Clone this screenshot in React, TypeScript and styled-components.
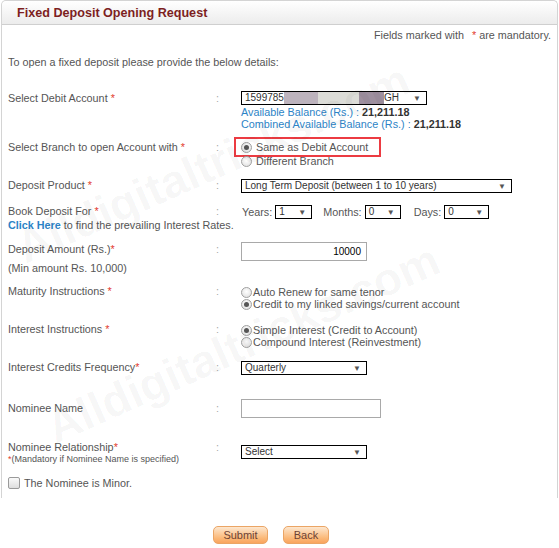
import React, { FC } from "react";
import styled, { createGlobalStyle, css } from "styled-components";

const GlobalStyle = createGlobalStyle`
  html, body {
    margin: 0;
    padding: 0;
    background: #fff;
  }
  body {
    font-family: "Liberation Sans", Arial, sans-serif;
    font-size: 10.8px;
    color: #555;
  }
`;

const Page = styled.div`
  position: relative;
  width: 559px;
  height: 548px;
  overflow: hidden;
`;

const Panel = styled.div`
  margin-left: 1px;
  width: 555px;
  height: 497px;
  border: 1px solid #d4d4d4;
  border-bottom: none;
  border-radius: 5px 5px 0 0;
`;

const Header = styled.div`
  height: 23px;
  display: flex;
  align-items: center;
  padding-left: 15px;
  border-bottom: 1px solid #cfcfcf;
  border-radius: 5px 5px 0 0;
  background: linear-gradient(#ffffff, #ececec);

  h1 {
    margin: 0;
    font-size: 12.6px;
    font-weight: bold;
    color: #7d1f1f;
  }
`;

const Note = styled.div`
  margin-top: 3px;
  height: 14px;
  line-height: 14px;
  text-align: right;
  padding-right: 6px;
`;

const Star = styled.span<{ $pad?: boolean }>`
  color: #e23a2e;
  ${({ $pad }) => $pad && css`margin: 0 3px 0 5px;`}
`;

const Row = styled.div<{ $h: number }>`
  display: flex;
  align-items: flex-start;
  height: ${({ $h }) => $h}px;
  padding-left: 6px;
  line-height: 14px;
`;

const Intro = styled(Row)`
  margin-top: 13px;
`;

const Label = styled.div<{ $pt?: number }>`
  width: 208px;
  flex-shrink: 0;
  padding-top: ${({ $pt }) => $pt ?? 0}px;
`;

const SubNote = styled.div<{ $mt?: number; $small?: boolean }>`
  margin-top: ${({ $mt }) => $mt ?? 0}px;
  ${({ $small }) =>
    $small &&
    css`
      font-size: 9px;
      line-height: 11px;
    `}
`;

const Colon = styled.div<{ $pt?: number }>`
  width: 25px;
  flex-shrink: 0;
  color: #a8a8a8;
  padding-top: ${({ $pt }) => $pt ?? 0}px;
`;

const Value = styled.div`
  display: flex;
  flex-direction: column;
`;

const BalanceLine = styled.div`
  line-height: 12px;
  white-space: nowrap;
`;

const LinkText = styled.span<{ $bold?: boolean }>`
  color: #2c83c6;
  ${({ $bold }) => $bold && css`font-weight: bold;`}
`;

const Amount = styled.b`
  color: #333;
`;

const SelectBox = styled.div<{ $w: number }>`
  position: relative;
  box-sizing: border-box;
  width: ${({ $w }) => $w}px;
  height: 14px;
  border: 1px solid #000;
  display: flex;
  align-items: center;
  padding-left: 3px;
  font-size: 10px;
  color: #333;
  line-height: 12px;
  white-space: nowrap;
  overflow: hidden;

  &::after {
    content: "▼";
    position: absolute;
    right: 5px;
    top: 1px;
    font-size: 8px;
    color: #555;
  }
`;

const Blur = styled.span<{ $w: number; $c: string }>`
  display: inline-block;
  flex-shrink: 0;
  width: ${({ $w }) => $w}px;
  height: 12px;
  background: ${({ $c }) => $c};
`;

const TextBox = styled.div<{ $w: number }>`
  box-sizing: border-box;
  width: ${({ $w }) => $w}px;
  height: 19px;
  border: 1px solid #a9a9a9;
  display: flex;
  align-items: center;
  justify-content: flex-end;
  padding-right: 5px;
  font-size: 10px;
  color: #000;
`;

const Options = styled.div<{ $lh: number; $pt?: number }>`
  display: flex;
  flex-direction: column;
  line-height: ${({ $lh }) => $lh}px;
  padding-top: ${({ $pt }) => $pt ?? 0}px;
`;

const Option = styled.label<{ $gap: number; $highlight?: boolean }>`
  position: relative;
  display: flex;
  align-items: center;
  gap: ${({ $gap }) => $gap}px;
  white-space: nowrap;

  ${({ $highlight }) =>
    $highlight &&
    css`
      &::after {
        content: "";
        position: absolute;
        left: -7px;
        top: -3px;
        width: 143px;
        height: 16px;
        border: 2px solid #ec3b42;
      }
    `}
`;

const RadioDot = styled.span<{ $on?: boolean }>`
  box-sizing: border-box;
  width: 11px;
  height: 11px;
  border-radius: 50%;
  border: 1px solid #a0a0a0;
  background: radial-gradient(circle at 50% 40%, #ffffff, #dcdcdc);
  display: inline-flex;
  align-items: center;
  justify-content: center;
  flex-shrink: 0;

  &::before {
    content: "";
    width: 5px;
    height: 5px;
    border-radius: 50%;
    background: ${({ $on }) => ($on ? "#555" : "transparent")};
  }
`;

const Tenure = styled.div`
  display: flex;
  align-items: center;
  padding-top: 1px;
`;

const TenureLabel = styled.span<{ $ml: number }>`
  margin-left: ${({ $ml }) => $ml}px;
  margin-right: 3px;
`;

const CheckRow = styled(Row)`
  padding-left: 6px;
`;

const CheckBox = styled.span`
  box-sizing: border-box;
  width: 12px;
  height: 12px;
  margin-top: 1px;
  margin-right: 4px;
  border: 1px solid #9a9a9a;
  border-radius: 2px;
  background: linear-gradient(#fafafa, #dedede);
`;

const Buttons = styled.div`
  display: flex;
  gap: 15px;
  padding-left: 213px;
  margin-top: 28px;
`;

const Button = styled.button<{ $w: number }>`
  box-sizing: border-box;
  width: ${({ $w }) => $w}px;
  height: 18px;
  padding: 0;
  border: 1px solid #eba565;
  border-radius: 5px;
  background: linear-gradient(#fde7cf, #fbb877 70%, #f9a45e);
  font-family: "Liberation Sans", Arial, sans-serif;
  font-size: 11px;
  color: #6e4234;
  line-height: 16px;
`;

const Watermark = styled.div<{ $x: number; $y: number }>`
  position: absolute;
  left: ${({ $x }) => $x}px;
  top: ${({ $y }) => $y}px;
  transform: rotate(-24deg);
  transform-origin: left bottom;
  font-size: 46px;
  font-weight: bold;
  color: rgba(0, 0, 0, 0.04);
  white-space: nowrap;
  pointer-events: none;
`;

const Radio: FC<{ on?: boolean; gap: number; highlight?: boolean; text: string }> = ({
  on,
  gap,
  highlight,
  text,
}) => (
  <Option $gap={gap} $highlight={highlight}>
    <RadioDot $on={on} />
    {text}
  </Option>
);

const App: FC = () => {
  return (
    <Page>
      <GlobalStyle />
      <Panel>
        <Header>
          <h1>Fixed Deposit Opening Request</h1>
        </Header>
        <Note>
          Fields marked with <Star $pad>*</Star>are mandatory.
        </Note>

        <Intro $h={36}>To open a fixed deposit please provide the below details:</Intro>

        <Row $h={49}>
          <Label>
            Select Debit Account <Star>*</Star>
          </Label>
          <Colon>:</Colon>
          <Value>
            <SelectBox $w={186}>
              1599785
              <Blur $w={34} $c="#bdb3bd" />
              <Blur $w={41} $c="#dcdcd7" />
              <Blur $w={25} $c="#9e909f" />
              GH
            </SelectBox>
            <BalanceLine style={{ marginTop: 1 }}>
              <LinkText>Available Balance (Rs.) : </LinkText>
              <Amount>21,211.18</Amount>
            </BalanceLine>
            <BalanceLine>
              <LinkText>Combined Available Balance (Rs.) : </LinkText>
              <Amount>21,211.18</Amount>
            </BalanceLine>
          </Value>
        </Row>

        <Row $h={38}>
          <Label>
            Select Branch to open Account with <Star>*</Star>
          </Label>
          <Colon>:</Colon>
          <Options $lh={14}>
            <Radio on gap={4} highlight text="Same as Debit Account" />
            <Radio gap={4} text="Different Branch" />
          </Options>
        </Row>

        <Row $h={26}>
          <Label>
            Deposit Product <Star>*</Star>
          </Label>
          <Colon>:</Colon>
          <Value style={{ paddingTop: 1 }}>
            <SelectBox $w={271}>Long Term Deposit (between 1 to 10 years)</SelectBox>
          </Value>
        </Row>

        <Row $h={38}>
          <Label>
            Book Deposit For <Star>*</Star>
            <div style={{ whiteSpace: "nowrap" }}>
              <LinkText $bold>Click Here</LinkText> to find the prevailing Interest Rates.
            </div>
          </Label>
          <Colon>:</Colon>
          <Tenure>
            <TenureLabel $ml={1}>Years:</TenureLabel>
            <SelectBox $w={37}>1</SelectBox>
            <TenureLabel $ml={11}>Months:</TenureLabel>
            <SelectBox $w={36}>0</SelectBox>
            <TenureLabel $ml={13}>Days:</TenureLabel>
            <SelectBox $w={45}>0</SelectBox>
          </Tenure>
        </Row>

        <Row $h={42}>
          <Label>
            Deposit Amount (Rs.)<Star>*</Star>
            <SubNote $mt={5}>(Min amount Rs. 10,000)</SubNote>
          </Label>
          <Colon>:</Colon>
          <TextBox $w={126}>10000</TextBox>
        </Row>

        <Row $h={38}>
          <Label>
            Maturity Instructions <Star>*</Star>
          </Label>
          <Colon>:</Colon>
          <Options $lh={12} $pt={2}>
            <Radio gap={1} text="Auto Renew for same tenor" />
            <Radio on gap={1} text="Credit to my linked savings/current account" />
          </Options>
        </Row>

        <Row $h={38}>
          <Label>
            Interest Instructions <Star>*</Star>
          </Label>
          <Colon>:</Colon>
          <Options $lh={12} $pt={2}>
            <Radio on gap={1} text="Simple Interest (Credit to Account)" />
            <Radio gap={1} text="Compound Interest (Reinvestment)" />
          </Options>
        </Row>

        <Row $h={39}>
          <Label>
            Interest Credits Frequency<Star>*</Star>
          </Label>
          <Colon>:</Colon>
          <Value style={{ paddingTop: 1 }}>
            <SelectBox $w={126}>Quarterly</SelectBox>
          </Value>
        </Row>

        <Row $h={41}>
          <Label $pt={2}>Nominee Name</Label>
          <Colon $pt={2}>:</Colon>
          <TextBox $w={140} />
        </Row>

        <Row $h={36}>
          <Label>
            Nominee Relationship<Star>*</Star>
            <SubNote $small>
              <Star>*</Star>(Mandatory if Nominee Name is specified)
            </SubNote>
          </Label>
          <Colon>:</Colon>
          <Value style={{ paddingTop: 5 }}>
            <SelectBox $w={126}>Select</SelectBox>
          </Value>
        </Row>

        <CheckRow $h={23}>
          <CheckBox />
          The Nominee is Minor.
        </CheckRow>
      </Panel>

      <Buttons>
        <Button $w={55}>Submit</Button>
        <Button $w={46}>Back</Button>
      </Buttons>

      <Watermark $x={30} $y={220}>Alldigitaltricks.com</Watermark>
      <Watermark $x={60} $y={400}>Alldigitaltricks.com</Watermark>
    </Page>
  );
};

export default App;
